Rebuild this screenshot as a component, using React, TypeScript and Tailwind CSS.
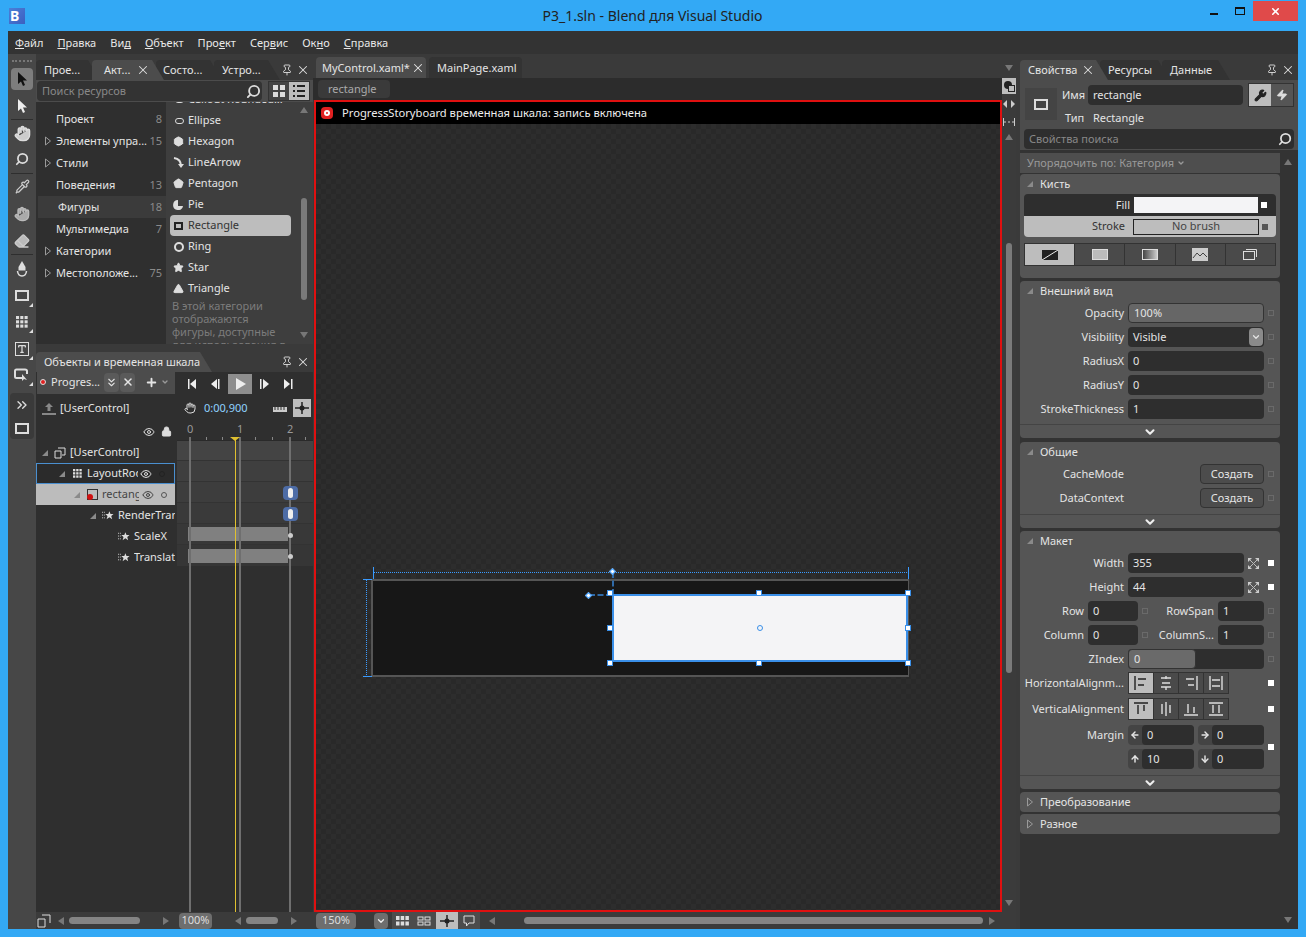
import React from "react";
import { Hand, Search, Pipette, Eraser, Pin, X, Wrench, Zap, Eye, Lock, Plus, ChevronDown, ChevronsDown, ChevronsRight, Star, Hexagon, Pentagon, Triangle, Type, ArrowLeft, ArrowRight, ArrowUp, ArrowDown } from "lucide-react";

const Tri = ({ open = false, className = "" }: { open?: boolean; className?: string }) =>
  open ? (
    <svg width="8" height="8" viewBox="0 0 8 8" className={className}><path d="M7 1V7H1Z" fill="#8a8a8a" /></svg>
  ) : (
    <svg width="8" height="10" viewBox="0 0 8 10" className={className}><path d="M1.5 1L6.5 5L1.5 9Z" fill="none" stroke="#9a9a9a" /></svg>
  );

const ArrowTri = ({ dir, className = "" }: { dir: "l" | "r" | "u" | "d"; className?: string }) => {
  const d = { l: "M8 1V9L2 5Z", r: "M2 1V9L8 5Z", u: "M1 8H9L5 2Z", d: "M1 2H9L5 8Z" }[dir];
  return <svg width="10" height="10" viewBox="0 0 10 10" className={className}><path d={d} fill="#777" /></svg>;
};

const PanelTab = ({ w, label, active, close, closeMl = "ml-1", ml = 0, pl = "pl-2" }: { w: string; label: string; active?: boolean; close?: boolean; closeMl?: string; ml?: number; pl?: string }) => (
  <div className={`${w} ${pl} h-5 flex items-center shrink-0 rounded-tl text-[11px] text-[#e4e4e4] [clip-path:polygon(0_0,calc(100%-12px)_0,100%_100%,0_100%)] ${active ? "bg-[#4c4c4c] z-10 relative" : "bg-[#333333]"} ${ml ? "-ml-2" : ""}`}>
    <span>{label}</span>
    {close && <X size={14} strokeWidth={1.8} className={`${closeMl} shrink-0 text-[#ddd]`} />}
  </div>
);

const PinClose = () => (
  <div className="ml-auto h-5 flex items-center gap-[3px] pr-[3px] text-[#ddd]">
    <Pin size={12} strokeWidth={1.8} />
    <X size={14} strokeWidth={1.8} />
  </div>
);

const Arrow = ({ fill = "#111", stroke = "none" }: { fill?: string; stroke?: string }) => (
  <svg width="14" height="16" viewBox="0 0 14 16"><path d="M3 1V13L6 10.5L8 15L10 14L8 9.5H12Z" fill={fill} stroke={stroke} /></svg>
);

const Corner = ({ children }: { children: React.ReactNode }) => (
  <div className="relative w-[22px] h-[22px] flex items-center justify-center text-[#ddd]">
    {children}
    <div className="absolute right-0 bottom-0 w-0 h-0 border-l-[4px] border-l-transparent border-b-[4px] border-b-[#ddd]" />
  </div>
);

const GridIcon = ({ size = 14, color = "#ddd" }: { size?: number; color?: string }) => (
  <svg width={size} height={size} viewBox="0 0 14 14" fill={color}>
    {[0, 5, 10].flatMap((x) => [0, 5, 10].map((y) => <rect key={`${x}${y}`} x={x} y={y} width="3.6" height="3.6" />))}
  </svg>
);

const Toolbar = () => (
  <div className="w-[28px] shrink-0 bg-[#474747] flex flex-col items-center">
    <div className="h-[6px] mt-[6px] w-[20px] border-t-2 border-dotted border-[#777]" />
    <div className="w-[22px] h-[22px] mt-[2px] rounded-sm bg-[#7d7d7d] flex items-center justify-center"><Arrow /></div>
    <div className="h-[27px] mt-[2px] flex items-center"><Arrow fill="#eee" /></div>
    <div className="w-[22px] h-px bg-[#2e2e2e]" />
    <div className="h-[26px] flex items-center text-[#ddd]"><Hand size={17} fill="#ccc" /></div>
    <div className="h-[26px] flex items-center text-[#ddd]"><Search size={14} strokeWidth={3} className="-scale-x-100" /></div>
    <div className="w-[22px] h-px bg-[#2e2e2e] mt-[1px]" />
    <div className="h-[25px] flex items-center text-[#ccc]"><Pipette size={15} /></div>
    <div className="h-[29px] flex items-center text-[#bbb]"><Hand size={16} fill="#aaa" /></div>
    <div className="h-[26px] flex items-center text-[#ccc]"><Eraser size={16} fill="#bbb" /></div>
    <div className="w-[22px] h-px bg-[#2e2e2e]" />
    <div className="h-[27px] flex items-center"><svg width="12" height="16" viewBox="0 0 12 16"><path d="M6 0L9.500 6V9.500H2.500V6Z" fill="#ddd" /><path d="M1.500 10Q2 15 6 15Q10 15 10.500 10" fill="none" stroke="#ddd" strokeWidth="1.500" /></svg></div>
    <div className="h-[27px] flex items-center"><Corner><div className="w-[14px] h-[11px] border-2 border-[#ddd]" /></Corner></div>
    <div className="h-[26px] flex items-center"><Corner><GridIcon size={12} /></Corner></div>
    <div className="h-[27px] flex items-center"><Corner><div className="w-[14px] h-[14px] border border-[#ddd] flex items-center justify-center"><Type size={10} strokeWidth={3} /></div></Corner></div>
    <div className="h-[26px] flex items-center"><Corner><svg width="16" height="14" viewBox="0 0 16 14"><path d="M8 10H2.500Q1 10 1 8.500V3Q1 1.500 2.500 1.500H11Q13 1.500 13 3V6" fill="none" stroke="#ddd" strokeWidth="2" /><path d="M8 6V13L10 11L13 12Z" fill="#ddd" /></svg></Corner></div>
    <div className="mt-[5px] w-[24px] h-[46px] bg-[#3a3a3a] flex flex-col items-center rounded-sm text-[#ddd]">
      <div className="h-[24px] flex items-center"><ChevronsRight size={16} /></div>
      <div className="h-[22px] flex items-center"><div className="w-[14px] h-[11px] border-2 border-[#ddd]" /></div>
    </div>
  </div>
);

const cats: [string, string, boolean, boolean?][] = [
  ["Проект", "8", false],
  ["Элементы упра...", "15", true],
  ["Стили", "", true],
  ["Поведения", "13", false],
  ["Фигуры", "18", false, true],
  ["Мультимедиа", "7", false],
  ["Категории", "", true],
  ["Местоположе...", "75", true],
];

const IEllipse = <div className="w-[9px] h-[6px] rounded-full border border-[#ddd] ml-[1px]" />;
const items: [string, React.ReactNode, boolean?][] = [
  ["Callout Rounded...", IEllipse],
  ["Ellipse", IEllipse],
  ["Hexagon", <Hexagon size={11} fill="#ddd" className="text-[#ddd]" />],
  ["LineArrow", <svg width="11" height="11" viewBox="0 0 11 11"><path d="M1 1Q8 2 8 9" fill="none" stroke="#ddd" strokeWidth="2" /><path d="M5 7H11L8 11Z" fill="#ddd" /></svg>],
  ["Pentagon", <Pentagon size={11} fill="#ddd" className="text-[#ddd]" />],
  ["Pie", <svg width="11" height="11" viewBox="0 0 11 11"><path d="M5 1A5 5 0 1 0 10 7H5Z" fill="#ddd" /></svg>],
  ["Rectangle", <div className="w-[9px] h-[8px] border-2 border-[#222]" />, true],
  ["Ring", <div className="w-[10px] h-[10px] rounded-full border-2 border-[#ddd]" />],
  ["Star", <Star size={11} fill="#ddd" className="text-[#ddd]" />],
  ["Triangle", <Triangle size={11} fill="#ddd" className="text-[#ddd]" />],
];

const Assets = () => (
  <div className="h-[290px] flex flex-col">
    <div className="h-5 mt-[6px] flex items-end">
      <PanelTab w="w-[64px]" label="Прое..." />
      <PanelTab w="w-[72px]" label="Акт..." active close closeMl="ml-[6px]" ml={1} pl="pl-3" />
      <PanelTab w="w-[66px]" label="Состо..." ml={1} pl="pl-[7px]" />
      <PanelTab w="w-[66px]" label="Устро..." ml={1} pl="pl-2" />
      <PinClose />
    </div>
    <div className="h-[22px] bg-[#4c4c4c] flex items-center pl-px pr-[3px]">
      <div className="w-[225px] h-[20px] rounded bg-[#333] flex items-center pl-[5px] pr-[1px] text-[11px] text-[#888]">
        Поиск ресурсов
        <Search size={15} strokeWidth={3} className="ml-auto text-[#ddd] -scale-x-100" />
      </div>
      <div className="ml-auto w-[42px] h-[20px] border border-[#333] flex">
        <div className="w-5 flex items-center justify-center bg-[#444]"><svg width="12" height="12" viewBox="0 0 12 12" fill="#ddd"><rect width="5" height="5" /><rect x="7" width="5" height="5" /><rect y="7" width="5" height="5" /><rect x="7" y="7" width="5" height="5" /></svg></div>
        <div className="flex-1 flex items-center justify-center bg-[#bdbdbd]"><svg width="12" height="12" viewBox="0 0 12 12" fill="#222"><rect width="2" height="2" /><rect x="4" width="8" height="2" /><rect y="5" width="2" height="2" /><rect x="4" y="5" width="8" height="2" /><rect y="10" width="2" height="2" /><rect x="4" y="10" width="8" height="2" /></svg></div>
      </div>
    </div>
    <div className="h-[242px] flex overflow-hidden">
      <div className="w-[130px] shrink-0 bg-[#2f2f2f] pt-[6px]">
        {cats.map(([n, c, arrow, sel]) => (
          <div key={n} className={`h-[22px] flex items-center pr-1 pl-[2px] text-[11px] text-[#e4e4e4] ${sel ? "bg-[#3b3b3b] ml-[2px] pl-0" : ""}`}>
            <span className="w-[18px] pl-[6px] flex">{arrow && <Tri />}</span>
            <span className="whitespace-nowrap">{n}</span>
            <span className="ml-auto text-[#8a8a8a]">{c}</span>
          </div>
        ))}
      </div>
      <div className="flex-1 bg-[#3e3e3e] relative overflow-hidden">
        <div className="-mt-[13px] pl-[4px]">
          {items.map(([n, ic, sel]) => (
            <div key={n} className={`h-[21px] w-[121px] flex items-center gap-[4px] text-[11px] whitespace-nowrap rounded-sm pl-[3px] ${sel ? "bg-[#bdbdbd] text-[#333]" : "text-[#e4e4e4]"}`}>
              <span className="w-[11px] flex justify-center">{ic}</span>{n}
            </div>
          ))}
          <div className="pl-[2px] w-[122px] text-[11px] leading-[13px] text-[#7c7c7c]">В этой категории отображаются фигуры, доступные для использования в</div>
        </div>
        <ArrowTri dir="u" className="absolute right-[4px] top-[3px]" />
        <ArrowTri dir="d" className="absolute right-[4px] top-[228px]" />
        <div className="absolute right-[6px] top-[96px] w-[6px] h-[102px] rounded-full bg-[#7a7a7a]" />
      </div>
    </div>
  </div>
);

const TreeRow = ({ pl, open, icon, label, className = "", h = "h-[21px]", right }: { pl: number; open?: boolean; icon: React.ReactNode; label: string; className?: string; h?: string; right?: React.ReactNode }) => (
  <div className={`${h} flex items-center text-[11px] whitespace-nowrap overflow-hidden ${className}`}>
    <div style={{ width: pl }} className="shrink-0 flex justify-end pr-[5px]">{open && <Tri open />}</div>
    <span className="w-[12px] shrink-0 flex justify-center">{icon}</span>
    <span className="ml-[4px] overflow-hidden flex-1">{label}</span>
    {right}
  </div>
);

const Effect = () => (
  <svg width="13" height="9" viewBox="0 0 13 9"><path d="M0 1H3M0 4H3M0 7H3" stroke="#ddd" strokeDasharray="1 1" /><path d="M8 0L9.200 3L12.500 3L10 5L11 8.500L8 6.500L5 8.500L6 5L3.500 3L6.800 3Z" fill="#ddd" /></svg>
);

const TIcon = ({ children, active }: { children: React.ReactNode; active?: boolean }) => (
  <div className={`w-[24px] h-[20px] flex items-center justify-center ${active ? "bg-[#8e8e8e]" : ""}`}>{children}</div>
);

const Objects = () => (
  <div className="flex-1 flex flex-col min-h-0">
    <div className="h-5 flex items-end">
      <div className="w-[176px] h-5 pl-2 flex items-center text-[11px] text-[#e4e4e4] bg-[#4c4c4c] whitespace-nowrap rounded-tl [clip-path:polygon(0_0,calc(100%-12px)_0,100%_100%,0_100%)]">Объекты и временная шкала</div>
      <PinClose />
    </div>
    <div className="flex-1 flex min-h-0 bg-[#2f2f2f]">
      <div className="w-[139px] shrink-0 pl-px">
        <div className="h-[22px] pb-[2px] bg-[#4c4c4c] flex items-center text-[11px] text-[#e4e4e4]">
          <div className="w-[6px] h-[6px] ml-[3px] rounded-full border border-[#ddd] bg-[#e02020]" />
          <span className="ml-[5px] whitespace-nowrap">Progres...</span>
          <div className="ml-[4px] w-[15px] h-[19px] rounded-sm bg-[#5a5a5a] flex items-center justify-center"><ChevronsDown size={13} /></div>
          <div className="ml-px w-[15px] h-[19px] rounded-sm bg-[#5a5a5a] flex items-center justify-center"><X size={12} strokeWidth={3} /></div>
          <Plus size={13} strokeWidth={3.5} className="ml-[10px]" />
          <ChevronDown size={8} strokeWidth={4} className="ml-[3px] text-[#999]" />
        </div>
        <div className="h-[25px] mt-[2px] flex items-center text-[11px] text-[#e4e4e4]">
          <svg width="14" height="12" viewBox="0 0 14 12" className="ml-[5px]"><path d="M7 0L11 4H8.500V8H5.500V4H3ZM0 10H14V12H0Z" fill="#888" /></svg>
          <span className="ml-[4px]">[UserControl]</span>
        </div>
        <div className="h-[21px] flex items-center justify-end gap-[6px] pr-[3px] text-[#ddd]"><Eye size={12} /><Lock size={11} fill="#ddd" /></div>
        <TreeRow pl={17} open icon={<svg width="12" height="12" viewBox="0 0 12 12"><path d="M4 1H11V8H8M1 4H7V11H1Z" fill="none" stroke="#ddd" /></svg>} label="[UserControl]" className="text-[#e4e4e4] ml-0" />
        <TreeRow h="h-[21px]" pl={34} open icon={<GridIcon size={9} />} label="LayoutRoot" className="text-[#e4e4e4] border border-[#4a8fd0] bg-[#2b2b2b] -ml-px" right={<div className="w-[36px] shrink-0 pl-[2px] flex items-center gap-[7px] text-[#ddd]"><Eye size={12} /><span className="w-[6px] h-[6px] rounded-full border border-[#222]" /></div>} />
        <TreeRow pl={50} open icon={<div className="relative w-[11px] h-[11px] border border-[#333]"><div className="absolute -left-px -bottom-px w-[6px] h-[6px] rounded-full bg-[#d01010]" /></div>} label="rectangle" className="bg-[#bcbcbc] text-[#444] -ml-px" right={<div className="w-[36px] shrink-0 pl-[3px] flex items-center gap-[7px] text-[#444]"><Eye size={12} /><span className="w-[6px] h-[6px] rounded-full border border-[#555]" /></div>} />
        <TreeRow pl={65} open icon={<Effect />} label="RenderTransform" className="text-[#e4e4e4]" />
        <TreeRow pl={81} icon={<Effect />} label="ScaleX" className="text-[#e4e4e4]" />
        <TreeRow pl={81} icon={<Effect />} label="TranslateX" className="text-[#e4e4e4]" />
      </div>
      <div className="flex-1 ml-[2px] relative overflow-hidden bg-[#2f2f2f]">
        <div className="h-[24px] bg-[#2f2f2f] flex items-center pl-[3px] text-[#eee]">
          <TIcon><svg width="10" height="10" viewBox="0 0 10 10" fill="#eee"><rect x="1" width="1.500" height="10" /><path d="M9 0V10L3 5Z" /></svg></TIcon>
          <TIcon><svg width="10" height="10" viewBox="0 0 10 10" fill="#eee"><rect x="7" width="1.500" height="10" /><path d="M6 0V10L0 5Z" /></svg></TIcon>
          <TIcon active><svg width="11" height="12" viewBox="0 0 11 12" fill="#eee"><path d="M1 0V12L11 6Z" /></svg></TIcon>
          <TIcon><svg width="10" height="10" viewBox="0 0 10 10" fill="#eee"><rect x="1" width="1.500" height="10" /><path d="M4 0V10L10 5Z" /></svg></TIcon>
          <TIcon><svg width="10" height="10" viewBox="0 0 10 10" fill="#eee"><rect x="8" width="1.500" height="10" /><path d="M1 0V10L7 5Z" /></svg></TIcon>
        </div>
        <div className="h-[24px] flex items-center text-[11px] text-[#8fd2ff] pl-[7px]">
          <Hand size={12} className="text-[#ddd]" />
          <span className="ml-[8px]">0:00,900</span>
          <svg width="14" height="8" viewBox="0 0 14 8" className="ml-[25px]"><path d="M0 3H14V8H0Z" fill="#ccc" /><path d="M2 3V6M5 3V6M8 3V6M11 3V6" stroke="#333" /></svg>
          <div className="ml-[6px] w-[18px] h-[18px] bg-[#bdbdbd] flex items-center justify-center"><svg width="14" height="14" viewBox="0 0 14 14"><path d="M0 7H14M7 1V13" stroke="#222" strokeWidth="1.500" /><circle cx="7" cy="7" r="2.500" fill="#222" /></svg></div>
        </div>
        <div className="h-[20px] relative text-[11px] text-[#999]">
          <span className="absolute left-[10px] top-[1px]">0</span>
          <span className="absolute left-[60px] top-[1px]">1</span>
          <span className="absolute left-[110px] top-[1px]">2</span>
          <div className="absolute left-[12px] right-0 bottom-0 h-[3px] bg-[repeating-linear-gradient(90deg,#888_0_1px,transparent_1px_16.600px)]" />
        </div>
        <div className="border-t border-[#2a2a2a]">
          <div className="h-[20px] bg-[#444] border-b border-[#333]" />
          <div className="h-[21px] bg-[#3f3f3f] border-b border-[#333]" />
          <div className="h-[21px] bg-[#3d3d3d] border-b border-[#333]" />
          <div className="h-[21px] bg-[#3a3a3a] border-b border-[#333]" />
          <div className="h-[21px] bg-[#383838] border-b border-[#333] flex items-center"><div className="ml-[11px] w-[100px] h-[14px] bg-[#808080]" /></div>
          <div className="h-[21px] bg-[#363636] flex items-center"><div className="ml-[11px] w-[100px] h-[14px] bg-[#808080]" /></div>
        </div>
        <div className="absolute left-[12px] top-[65px] bottom-0 w-[2px] bg-[#6f6f6f]" />
        <div className="absolute left-[62px] top-[65px] bottom-0 w-[2px] bg-[#6f6f6f]" />
        <div className="absolute left-[112px] top-[65px] bottom-0 w-[2px] bg-[#6f6f6f]" />
        <div className="absolute left-[58px] top-[65px] bottom-0 w-px bg-[#e0c030]" />
        <div className="absolute left-[53px] top-[65px] w-0 h-0 border-x-[5px] border-x-transparent border-t-[4px] border-t-[#e0c030]" />
        <div className="absolute left-[106px] top-[114px] w-[15px] h-[14px] bg-[#4d6ca6] rounded-sm flex items-center justify-center"><div className="w-[5px] h-[10px] rounded-full bg-[#eee]" /></div>
        <div className="absolute left-[106px] top-[135px] w-[15px] h-[14px] bg-[#4d6ca6] rounded-sm flex items-center justify-center"><div className="w-[5px] h-[10px] rounded-full bg-[#eee]" /></div>
        <div className="absolute left-[111px] top-[161px] w-[5px] h-[5px] rounded-full bg-[#ccc]" />
        <div className="absolute left-[111px] top-[182px] w-[5px] h-[5px] rounded-full bg-[#ccc]" />
      </div>
    </div>
    <div className="h-[17px] flex bg-[#3b3b3b] items-center">
      <div className="w-[140px] flex items-center">
        <svg width="14" height="14" viewBox="0 0 14 14" className="ml-px"><path d="M1 5H8V13H1ZM5 1H13V9" fill="none" stroke="#ddd" /></svg>
        <ArrowTri dir="l" className="ml-[5px]" />
        <div className="ml-[3px] w-[71px] h-[7px] rounded-full bg-[#848484]" />
        <ArrowTri dir="r" className="ml-[21px]" />
      </div>
      <div className="ml-[3px] w-[33px] h-[16px] rounded bg-[#6e6e6e] text-[11px] text-[#ddd] flex items-center justify-center">100%</div>
      <ArrowTri dir="l" className="ml-[21px]" />
      <div className="ml-[3px] w-[32px] h-[7px] rounded-full bg-[#848484]" />
      <ArrowTri dir="r" className="ml-[11px]" />
    </div>
  </div>
);

const Canvas = () => (
  <div className="flex-1 relative overflow-hidden bg-[#2a2a2a] bg-[repeating-conic-gradient(#2d2d2d_0_25%,#292929_0_50%)] bg-[length:10px_10px]">
    <div className="absolute left-[55px] top-[455px] w-[538px] h-[98px] bg-[#171717] border-2 border-[#555] border-r-[1px]" />
    <div className="absolute left-[57px] top-[448px] w-[536px] border-t border-dotted border-[#3a9bff]" />
    <div className="absolute left-[57px] top-[443px] h-[12px] border-l border-[#3a9bff]" />
    <div className="absolute left-[592px] top-[443px] h-[12px] border-l border-[#3a9bff]" />
    <div className="absolute left-[50px] top-[455px] h-[98px] border-l border-dotted border-[#3a9bff]" />
    <div className="absolute left-[47px] top-[455px] w-[9px] border-t border-[#3a9bff]" />
    <div className="absolute left-[47px] top-[552px] w-[9px] border-t border-[#3a9bff]" />
    <div className="absolute left-[296px] top-[448px] h-[23px] border-l-2 border-dashed border-[#2f6aa8]" />
    <div className="absolute left-[273px] top-[470px] w-[23px] border-t-2 border-dashed border-[#2f6aa8]" />
    <div className="absolute left-[294px] top-[445px] w-[5px] h-[5px] rotate-45 bg-white border border-[#3a9bff]" />
    <div className="absolute left-[270px] top-[469px] w-[5px] h-[5px] rotate-45 bg-white border border-[#3a9bff]" />
    <div className="absolute left-[296px] top-[470px] w-[296px] h-[68px] bg-[#f4f4f6] border-2 border-[#3a8fe8]">
      <div className="absolute left-[143px] top-[29px] w-[6px] h-[6px] rounded-full border border-[#3a8fe8]" />
    </div>
    {[[291, 466], [440, 466], [589, 466], [291, 501], [589, 501], [291, 536], [440, 536], [589, 536]].map(([x, y]) => (
      <div key={`${x}-${y}`} style={{ left: x, top: y }} className="absolute w-[6px] h-[6px] bg-white border border-[#3a8fe8]" />
    ))}
  </div>
);

const Center = () => (
  <div className="w-[703px] shrink-0 flex flex-col">
    <div className="h-[21px] mt-[3px] flex items-end pl-[3px] gap-[3px] relative">
      <div className="w-[110px] h-[21px] pt-px bg-[#4c4c4c] rounded-t flex items-center pl-[6px] text-[11px] text-[#e4e4e4] whitespace-nowrap">MyControl.xaml*<X size={14} strokeWidth={1.8} className="ml-[1px] shrink-0" /></div>
      <div className="w-[93px] h-[21px] pt-px bg-[#333] rounded-t flex items-center pl-2 text-[11px] text-[#e4e4e4]">MainPage.xaml</div>
      <ArrowTri dir="d" className="absolute right-[2px] top-[6px] " />
    </div>
    <div className="flex-1 flex min-h-0">
      <div className="w-[689px] flex flex-col min-h-0">
        <div className="h-[22px] bg-[#2c2c2c] flex items-center pl-[5px]">
          <div className="w-[72px] h-[18px] bg-[#3a3a3a] rounded-sm text-[11px] text-[#aaa] pl-[10px] flex items-center">rectangle</div>
        </div>
        <div className="flex-1 min-h-0 border-2 border-[#e01010] flex flex-col ml-px">
          <div className="h-[22px] bg-black flex items-center text-[11.2px] text-[#eee] pl-[5px]">
            <div className="w-[12px] h-[12px] rounded-sm bg-[#e02020] flex items-center justify-center mr-[9px]"><div className="w-[6px] h-[6px] rounded-full border-2 border-white" /></div>
            ProgressStoryboard временная шкала: запись включена
          </div>
          <Canvas />
        </div>
      </div>
      <div className="w-[14px] shrink-0 bg-[#3b3b3b] flex flex-col items-center relative">
        <div className="w-[14px] h-[16px] bg-[#bdbdbd] flex items-center justify-center"><svg width="11" height="11" viewBox="0 0 11 11"><circle cx="4" cy="4" r="4" fill="#222" /><rect x="4.500" y="4.500" width="6" height="6" fill="#bdbdbd" stroke="#222" /></svg></div>
        <div className="h-[19px] flex items-center"><svg width="12" height="8" viewBox="0 0 12 8"><path d="M4 0L0 4L4 8ZM8 0L12 4L8 8Z" fill="#ccc" /></svg></div>
        <div className="h-[17px] flex items-center"><svg width="12" height="8" viewBox="0 0 12 8"><path d="M0.500 0V8M11.500 0V8M1 4H3M5 4H7M9 4H11" stroke="#ccc" /></svg></div>
        <ArrowTri dir="u" className="mt-[2px]" />
        <div className="absolute left-[4px] top-[165px] w-[6px] h-[430px] rounded-full bg-[#7a7a7a]" />
        <ArrowTri dir="d" className="mt-auto mb-[4px]" />
      </div>
    </div>
    <div className="h-[17px] flex items-center bg-[#3b3b3b]">
      <div className="ml-[3px] w-[40px] h-[16px] rounded bg-[#6e6e6e] text-[11px] text-[#ddd] flex items-center justify-center">150%</div>
      <div className="ml-[18px] w-[14px] h-[16px] rounded-sm bg-[#6e6e6e] flex items-center justify-center"><ChevronDown size={10} strokeWidth={3} className="text-[#eee]" /></div>
      <div className="ml-[4px] w-[20px] h-[17px] bg-[#4c4c4c] flex items-center justify-center"><svg width="13" height="10" viewBox="0 0 13 10" fill="#ddd"><rect width="3.500" height="4" /><rect x="4.700" width="3.500" height="4" /><rect x="9.400" width="3.500" height="4" /><rect y="5.500" width="3.500" height="4" /><rect x="4.700" y="5.500" width="3.500" height="4" /><rect x="9.400" y="5.500" width="3.500" height="4" /></svg></div>
      <div className="w-[24px] h-[17px] bg-[#4c4c4c] flex items-center justify-center"><svg width="14" height="10" viewBox="0 0 14 10" fill="none" stroke="#ddd"><rect x="1" y="1" width="5" height="3" /><rect x="8" y="1" width="5" height="3" /><rect x="1" y="6" width="5" height="3" /><rect x="8" y="6" width="5" height="3" /></svg></div>
      <div className="w-[22px] h-[17px] bg-[#bdbdbd] flex items-center justify-center"><svg width="14" height="14" viewBox="0 0 14 14"><path d="M0 7H14M7 1V13" stroke="#222" strokeWidth="1.500" /><circle cx="7" cy="7" r="2.500" fill="#222" /></svg></div>
      <div className="w-[22px] h-[17px] bg-[#4c4c4c] flex items-center justify-center"><svg width="12" height="12" viewBox="0 0 12 12"><path d="M1 1H11V8H6L3.500 11V8H1Z" fill="none" stroke="#ddd" /></svg></div>
      <ArrowTri dir="l" className="ml-[7px]" />
      <div className="ml-[27px] w-[459px] h-[7px] rounded-full bg-[#848484]" />
      <ArrowTri dir="r" className="ml-[4px]" />
    </div>
  </div>
);

const Label = ({ w = "w-[108px]", children }: { w?: string; children: React.ReactNode }) => (
  <div className={`${w} shrink-0 text-right pr-1 text-[11px] text-[#e4e4e4] whitespace-nowrap`}>{children}</div>
);
const Mark = ({ on }: { on?: boolean }) => (
  <div className="w-[14px] shrink-0 flex justify-center">
    <div className={`w-[6px] h-[6px] ${on ? "bg-white" : "border border-[#6a6a6a]"}`} />
  </div>
);
const Inp = ({ w = "w-[136px]", children, className = "" }: { w?: string; children?: React.ReactNode; className?: string }) => (
  <div className={`${w} h-5 shrink-0 rounded bg-[#2e2e2e] text-[11px] text-[#e4e4e4] pl-[5px] flex items-center ${className}`}>{children}</div>
);
const Prop = ({ label, value }: { label: string; value: string }) => (
  <div className="h-6 flex items-center"><Label>{label}</Label><Inp>{value}</Inp><Mark /></div>
);
const Expander = () => (
  <div className="h-[14px] border-t border-[#444] flex items-center justify-center text-[#eee]"><ChevronDown size={14} strokeWidth={3.5} /></div>
);
const SecHead = ({ label, open = true }: { label: string; open?: boolean }) => (
  <div className="h-5 flex items-center text-[11px] text-[#e4e4e4]">
    <span className="w-[20px] flex justify-center">{open ? <Tri open /> : <Tri />}</span>{label}
  </div>
);
const Resize = () => (
  <svg width="11" height="11" viewBox="0 0 11 11" className="ml-[4px] mr-[5px] shrink-0"><path d="M0 0H4L0 4ZM11 11H7L11 7ZM11 0V4L7 0ZM0 11V7L4 11Z" fill="#ccc" /><path d="M2 2L9 9M9 2L2 9" stroke="#bbb" /></svg>
);

const AlignGroup = ({ icons, h }: { icons: string[]; h: string }) => (
  <div className={`w-[101px] ${h} flex shrink-0 border border-[#333]`}>
    {icons.map((d, i) => (
      <div key={i} className={`flex-1 flex items-center justify-center border-r border-[#333] last:border-r-0 ${i === 0 ? "bg-[#bdbdbd]" : "bg-[#4a4a4a]"}`}>
        <svg width="16" height="16" viewBox="0 0 16 16"><path d={d} fill="none" stroke={i === 0 ? "#222" : "#ddd"} strokeWidth="1.400" /></svg>
      </div>
    ))}
  </div>
);

const MarginBox = ({ icon, v }: { icon: React.ReactNode; v: string }) => (
  <div className="w-[66px] h-5 rounded bg-[#444] flex items-center text-[11px] text-[#e4e4e4] shrink-0">
    <span className="w-[14px] flex justify-center">{icon}</span>
    <div className="flex-1 h-5 rounded bg-[#2e2e2e] pl-[5px] flex items-center">{v}</div>
  </div>
);

const Props = () => (
  <div className="w-[278px] shrink-0 ml-[4px] flex flex-col bg-[#333] text-[11px]">
    <div className="bg-[#3a3a3a] h-[26px] flex items-end pt-[6px]">
      <PanelTab w="w-[88px]" label="Свойства" active close pl="pl-2" />
      <PanelTab w="w-[70px]" label="Ресурсы" ml={1} pl="pl-2" />
      <PanelTab w="w-[68px]" label="Данные" ml={1} pl="pl-2" />
      <PinClose />
    </div>
    <div className="bg-[#4c4c4c] h-[70px] flex flex-col">
      <div className="flex h-[48px]">
        <div className="ml-[5px] mt-[8px] w-[32px] h-[32px] bg-[#444] flex items-center justify-center"><div className="w-[14px] h-[11px] border-2 border-[#ddd]" /></div>
        <div className="ml-[5px] flex flex-col">
          <div className="h-[24px] flex items-center text-[#e4e4e4] mt-[3px]"><span className="w-[26px]">Имя</span><div className="w-[155px] h-5 rounded bg-[#2e2e2e] pl-[5px] flex items-center">rectangle</div></div>
          <div className="h-[21px] pt-px flex items-center text-[#e4e4e4]"><span className="w-[31px] pl-[3px]">Тип</span>Rectangle</div>
        </div>
        <div className="ml-[5px] mt-[3px] w-[46px] h-[24px] border border-[#333] flex">
          <div className="flex-1 bg-[#bdbdbd] flex items-center justify-center"><Wrench size={13} fill="#222" className="text-[#222]" /></div>
          <div className="flex-1 bg-[#555] flex items-center justify-center"><Zap size={12} fill="#ddd" className="text-[#ddd]" /></div>
        </div>
      </div>
      <div className="ml-[4px] w-[270px] h-5 mt-px rounded bg-[#2e2e2e] flex items-center pl-[5px] pr-[2px] text-[#888]">Свойства поиска<Search size={14} strokeWidth={3} className="ml-auto text-[#ddd] -scale-x-100" /></div>
    </div>
    <div className="flex-1 flex min-h-0 mt-[3px]">
      <div className="w-[260px] flex flex-col">
        <div className="h-5 bg-[#4e4e4e] flex items-center pl-[7px] text-[#999]">Упорядочить по: Категория<ChevronDown size={8} strokeWidth={4} className="ml-[3px]" /></div>
        <section className="mt-px h-[104px] rounded bg-[#555]">
          <SecHead label="Кисть" />
          <div className="mx-[4px] w-[252px] rounded-sm overflow-hidden">
            <div className="h-[22px] bg-[#2e2e2e] flex items-center"><Label w="w-[110px]">Fill</Label><div className="w-[124px] h-[16px] bg-[#f4f4f6]" /><div className="w-[12px] flex justify-center"><div className="w-[6px] h-[6px] bg-white" /></div></div>
            <div className="h-[21px] bg-[#bdbdbd] flex items-center"><div className="w-[105px] text-right pr-1 text-[#333]">Stroke</div><div className="ml-[4px] w-[126px] h-[16px] border border-[#222] flex items-center justify-center text-[#444]">No brush</div><div className="w-[11px] flex justify-center"><div className="w-[6px] h-[6px] bg-[#555]" /></div></div>
          </div>
          <div className="mx-[4px] mt-[6px] w-[252px] h-[23px] flex border border-[#333]">
            <div className="flex-1 bg-[#bdbdbd] flex items-center justify-center border-r border-[#333]"><svg width="16" height="10" viewBox="0 0 16 10"><rect width="16" height="10" fill="#222" /><path d="M0 10L16 0" stroke="#eee" /></svg></div>
            <div className="flex-1 bg-[#4a4a4a] flex items-center justify-center border-r border-[#333]"><div className="w-[16px] h-[11px] border border-[#ddd] bg-[#bbb]" /></div>
            <div className="flex-1 bg-[#4a4a4a] flex items-center justify-center border-r border-[#333]"><div className="w-[16px] h-[11px] border border-[#ddd] bg-[linear-gradient(90deg,#444,#ccc)]" /></div>
            <div className="flex-1 bg-[#4a4a4a] flex items-center justify-center border-r border-[#333]"><svg width="16" height="13" viewBox="0 0 16 13"><rect width="16" height="13" fill="#ccc" /><path d="M1 10L5 5L8 8L11 5L15 9" fill="none" stroke="#444" /></svg></div>
            <div className="flex-1 bg-[#4a4a4a] flex items-center justify-center"><svg width="14" height="11" viewBox="0 0 14 11" fill="none" stroke="#ddd"><rect x="0.500" y="2.500" width="11" height="8" /><path d="M3 0.500H13.500V8" /></svg></div>
          </div>
        </section>
        <section className="mt-[3px] h-[157px] rounded bg-[#555]">
          <SecHead label="Внешний вид" />
          <div className="h-6 flex items-center"><Label>Opacity</Label><Inp className="!bg-[#666] border border-[#333]">100%</Inp><Mark /></div>
          <div className="h-6 flex items-center"><Label>Visibility</Label><Inp className="relative">Visible<div className="absolute right-px top-px w-[14px] h-[18px] rounded-sm bg-[#8a8a8a] flex items-center justify-center"><ChevronDown size={10} strokeWidth={3} /></div></Inp><Mark /></div>
          <Prop label="RadiusX" value="0" />
          <Prop label="RadiusY" value="0" />
          <Prop label="StrokeThickness" value="1" />
          <div className="h-[3px]" />
          <Expander />
        </section>
        <section className="mt-[4px] h-[86px] rounded bg-[#555]">
          <SecHead label="Общие" />
          {["CacheMode", "DataContext"].map((l) => (
            <div key={l} className="h-6 flex items-center"><Label>{l}</Label><div className="ml-[72px] w-[64px] h-5 rounded bg-[#4c4c4c] border border-[#333] flex items-center justify-center text-[#e4e4e4]">Создать</div><Mark /></div>
          ))}
          <div className="h-1" />
          <Expander />
        </section>
        <section className="mt-[3px] h-[258px] rounded bg-[#555]">
          <SecHead label="Макет" />
          {[["Width", "355"], ["Height", "44"]].map(([l, v]) => (
            <div key={l} className="h-6 flex items-center"><Label>{l}</Label><Inp w="w-[116px]">{v}</Inp><Resize /><Mark on /></div>
          ))}
          {[["Row", "0", "RowSpan", "1"], ["Column", "0", "ColumnS...", "1"]].map(([a, b, c, d]) => (
            <div key={a} className="h-6 flex items-center">
              <Label w="w-[68px]">{a}</Label>
              <Inp w="w-[50px]">{b}</Inp>
              <Mark />
              <Label w="w-[66px]">{c}</Label>
              <Inp w="w-[46px]">{d}</Inp>
              <Mark />
            </div>
          ))}
          <div className="h-6 flex items-center"><Label>ZIndex</Label><Inp className="relative !pl-0 overflow-hidden"><div className="w-[68px] h-5 rounded bg-[#6a6a6a] pl-[5px] flex items-center border border-[#333]">0</div></Inp><Mark /></div>
          <div className="h-6 flex items-center"><Label>HorizontalAlignm...</Label><AlignGroup h="h-[22px]" icons={["M2 1V15M5 4H13M5 10H11", "M3 3H13M8 1V4M4 8H12M8 12V15M3 12H13", "M14 1V15M3 4H11M5 10H11", "M2 1V15M14 1V15M4 5H12M4 11H12"]} /><div className="w-[35px]" /><Mark on /></div>
          <div className="h-6 mt-[2px] mb-[2px] flex items-center"><Label>VerticalAlignment</Label><AlignGroup h="h-[22px]" icons={["M1 2H15M5 4V13M11 4V10", "M4 3V13M8 1V15M12 4V12", "M1 14H15M5 3V12M11 6V12", "M1 2H15M1 14H15M5 4V12M11 4V12"]} /><div className="w-[35px]" /><Mark on /></div>
          <div className="flex items-center">
            <div className="flex flex-col">
              <div className="h-6 flex items-center"><Label>Margin</Label><MarginBox icon={<ArrowLeft size={10} strokeWidth={3.5} />} v="0" /><div className="w-[4px]" /><MarginBox icon={<ArrowRight size={10} strokeWidth={3.5} />} v="0" /></div>
              <div className="h-6 flex items-center"><Label>{" "}</Label><MarginBox icon={<ArrowUp size={10} strokeWidth={3.5} />} v="10" /><div className="w-[4px]" /><MarginBox icon={<ArrowDown size={10} strokeWidth={3.5} />} v="0" /></div>
            </div>
            <Mark on />
          </div>
          <div className="h-1" />
          <Expander />
        </section>
        <section className="mt-[3px] h-5 rounded bg-[#555]"><SecHead label="Преобразование" open={false} /></section>
        <section className="mt-[2px] h-5 rounded bg-[#555]"><SecHead label="Разное" open={false} /></section>
      </div>
      <div className="w-[16px] flex flex-col items-center justify-between py-[4px]"><ArrowTri dir="u" /><ArrowTri dir="d" /></div>
    </div>
  </div>
);

const menu: [string, string, string][] = [
  ["", "Ф", "айл"],
  ["", "П", "равка"],
  ["Ви", "д", ""],
  ["", "О", "бъект"],
  ["Про", "е", "кт"],
  ["Сер", "в", "ис"],
  ["Ок", "н", "о"],
  ["", "С", "правка"],
];

export default function App() {
  return (
    <div className="w-[1306px] h-[937px] overflow-hidden bg-[#33a9f5] flex flex-col font-['Noto_Sans',sans-serif]">
      <div className="h-[31px] shrink-0 flex items-center relative">
        <div className="ml-[9px] w-[16px] h-[16px] bg-[linear-gradient(135deg,#4a7fd8,#3c5fc0)] text-white font-bold text-[14px] leading-[15px] pl-[1px]">B</div>
        <div className="flex-1 text-center text-[14px] text-[#222] -ml-[26px]">P3_1.sln - Blend для Visual Studio</div>
        <div className="absolute right-[8px] top-[1px] flex items-start">
          <div className="w-[26px] h-[20px] flex items-center justify-center"><div className="w-[8px] h-[2px] bg-[#111] mt-[6px]" /></div>
          <div className="w-[26px] h-[20px] flex items-center justify-center"><div className="w-[10px] h-[8px] border border-t-2 border-[#111]" /></div>
          <div className="w-[45px] h-[20px] bg-[#e04a4a] flex items-center justify-center"><X size={11} strokeWidth={3.5} className="text-white" /></div>
        </div>
      </div>
      <div className="flex-1 mx-[8px] mb-[8px] bg-[#3a3a3a] flex flex-col min-h-0">
        <div className="h-[23px] pt-[2px] shrink-0 bg-[#333] flex items-center pl-[7px] gap-[14px] text-[11px] text-[#e8e8e8]">
          {menu.map(([a, u, b]) => <span key={a + u + b}>{a}<span className="underline">{u}</span>{b}</span>)}
        </div>
        <div className="flex-1 flex min-h-0">
          <Toolbar />
          <div className="w-[277px] shrink-0 flex flex-col"><Assets /><div className="h-[8px]" /><Objects /></div>
          <Center />
          <Props />
        </div>
      </div>
    </div>
  );
}
